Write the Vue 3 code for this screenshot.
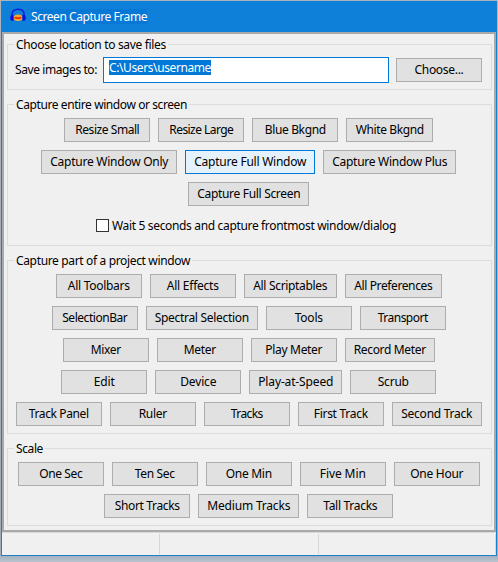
<script setup>
// Button tuples: label, button width, label width
const windowRows = [
  [['Resize Small', 86, 64], ['Resize Large', 86, 64], ['Blue Bkgnd', 86, 61], ['White Bkgnd', 87, 68]],
  [['Capture Window Only', 136, 118], ['Capture Full Window', 130, 112], ['Capture Window Plus', 133, 115]],
  [['Capture Full Screen', 121, 103]],
]
const partRows = [
  [['All Toolbars', 86, 62], ['All Effects', 86, 52], ['All Scriptables', 93, 74], ['All Preferences', 97, 78]],
  [['SelectionBar', 86, 65], ['Spectral Selection', 112, 94], ['Tools', 86, 28], ['Transport', 86, 50]],
  [['Mixer', 86, 30], ['Meter', 86, 32], ['Play Meter', 86, 57], ['Record Meter', 90, 72]],
  [['Edit', 86, 21], ['Device', 86, 36], ['Play-at-Speed', 93, 75], ['Scrub', 86, 31]],
  [['Track Panel', 86, 60], ['Ruler', 86, 28], ['Tracks', 86, 32], ['First Track', 86, 54], ['Second Track', 90, 71]],
]
const scaleRows = [
  [['One Sec', 86, 43], ['Ten Sec', 86, 40], ['One Min', 86, 46], ['Five Min', 86, 46], ['One Hour', 86, 53]],
  [['Short Tracks', 86, 65], ['Medium Tracks', 101, 83], ['Tall Tracks', 86, 54]],
]
const groups = [
  { title: 'Capture entire window or screen', width: 171, cls: 'whole', rows: windowRows, wait: true },
  { title: 'Capture part of a project window', width: 174, cls: 'part', rows: partRows },
  { title: 'Scale', width: 27, cls: 'scale', rows: scaleRows },
]

// Spreads the tracking evenly so a label takes the given width
const vFit = {
  mounted(el, { value }) {
    const natural = el.getBoundingClientRect().width
    el.style.letterSpacing = (value - natural) / el.textContent.length + 'px'
  },
}
</script>

<template>
  <div class="desktop">
    <div class="window">
      <header class="titlebar">
        <svg class="logo" width="18" height="18" viewBox="0 0 18 18">
          <ellipse cx="9" cy="9.8" rx="4.3" ry="3.2" fill="#f7a823" />
          <path d="M4.8 9.8L7 8.8L9 9.4L11 8.8L13.2 9.8L11 11H7Z" fill="#ee2c10" />
          <path d="M2.8 8.5V7C2.8 3.4 5.3 1.3 9 1.3S15.2 3.4 15.2 7V8.5" fill="none" stroke="#1018dc" stroke-width="1.5" />
          <path d="M4.5 6.5V13C2.4 13.4 1.2 12 1.2 10S2.4 6.6 4.5 6.5ZM13.5 6.5V13C15.6 13.4 16.8 12 16.8 10S15.6 6.6 13.5 6.5Z" fill="#0c0fe0" />
        </svg>
        <span class="title"><span v-fit="116">Screen Capture Frame</span></span>
      </header>
      <main class="client">
        <section class="group location">
          <h2><span v-fit="150">Choose location to save files</span></h2>
          <div class="location-row">
            <label><span v-fit="82">Save images to:</span></label>
            <div class="field"><span v-fit="102" class="selected">C:\Users\username</span></div>
            <button class="choose"><span v-fit="49">Choose...</span></button>
          </div>
        </section>
        <section v-for="g in groups" :key="g.title" class="group" :class="g.cls">
          <h2><span v-fit="g.width">{{ g.title }}</span></h2>
          <div class="rows">
            <div v-for="(row, i) in g.rows" :key="i" class="row">
              <button
                v-for="[label, w, tw] in row"
                :key="label"
                :class="{ active: label === 'Capture Full Window' }"
                :style="{ width: w + 'px' }"
              ><span v-fit="tw">{{ label }}</span></button>
            </div>
          </div>
          <div v-if="g.wait" class="wait">
            <i class="box"></i>
            <span v-fit="284">Wait 5 seconds and capture frontmost window/dialog</span>
          </div>
        </section>
      </main>
      <footer class="status"><i></i><i></i><i></i></footer>
    </div>
  </div>
</template>

<style>
body { margin: 0; overflow: hidden; }
</style>

<style scoped>
* { box-sizing: border-box; }
.desktop {
  width: 498px;
  height: 562px;
  padding: 1px 1px 6px;
  background: linear-gradient(#adb3bd 0, #a2abb7 545px, #a7b0bd 556px, #bac3d0 562px);
  font: 12px/17px 'Noto Sans', 'Open Sans', sans-serif;
  color: #000;
}
.window {
  display: flex;
  flex-direction: column;
  height: 555px;
  border: solid #1b7fca;
  border-width: 0 1px 1px;
  background: #f0f0f0;
}
.titlebar {
  display: flex;
  flex: none;
  align-items: flex-start;
  height: 31px;
  padding: 7px 0 0 7px;
  background: #0f80d9;
  color: #fff;
}
.logo { flex: none; }
.title {
  height: 15px;
  margin: 1px 0 0 4px;
  background: #0878d7;
  line-height: 15px;
}
.client {
  display: flex;
  flex: none;
  flex-direction: column;
  height: 500px;
  padding: 10px 2px 0 3px;
  border: 2px solid #a9a9a9;
}
.group {
  flex: none;
  border: 1px solid #dcdcdc;
  padding: 0 1.5px 0 0;
}
.location { height: 46px; }
.whole { height: 142px; margin-top: 14px; }
.part { height: 174px; margin-top: 14px; }
.scale { height: 78px; margin-top: 14px; }
h2 {
  width: max-content;
  height: 16px;
  margin: -9px 0 0 6px;
  padding: 0 2px;
  background: #f0f0f0;
  font: inherit;
}
span { white-space: nowrap; }
.location-row {
  display: flex;
  align-items: center;
  margin-top: 5px;
  padding-left: 7px;
}
label {
  width: 88px;
  height: 18px;
}
.field {
  width: 286px;
  height: 26px;
  margin-right: 7px;
  padding: 2px 5px;
  border: 1px solid #0078d7;
  background: #fff;
}
.selected {
  display: block;
  width: max-content;
  height: 15px;
  background: #0078d7;
  color: #fff;
  line-height: 15px;
}
button {
  display: flex;
  flex: none;
  align-items: flex-start;
  justify-content: center;
  height: 24px;
  padding: 2px 0 0;
  border: 1px solid #adadad;
  border-radius: 0;
  background: #e1e1e1;
  color: #000;
  font: inherit;
}
.choose { width: 86px; }
.active {
  border-color: #0078d7;
  background: #e5f1fb;
}
.rows {
  display: flex;
  flex-direction: column;
  gap: 8px;
  padding-top: 6px;
}
.row {
  display: flex;
  justify-content: center;
  gap: 8px;
}
.wait {
  display: flex;
  align-items: center;
  gap: 3px;
  margin: 11px 0 0 88px;
}
.box {
  width: 13px;
  height: 13px;
  border: 1px solid #333;
  background: #fff;
}
.status {
  display: flex;
  flex: 1;
  padding: 1px 0;
  border-top: 1px solid #d9d9d9;
}
.status i {
  width: 159px;
  border-right: 1px solid #d7d7d7;
}
.status i:first-child { width: 158px; }
.status i:last-child { width: 177px; }
</style>
